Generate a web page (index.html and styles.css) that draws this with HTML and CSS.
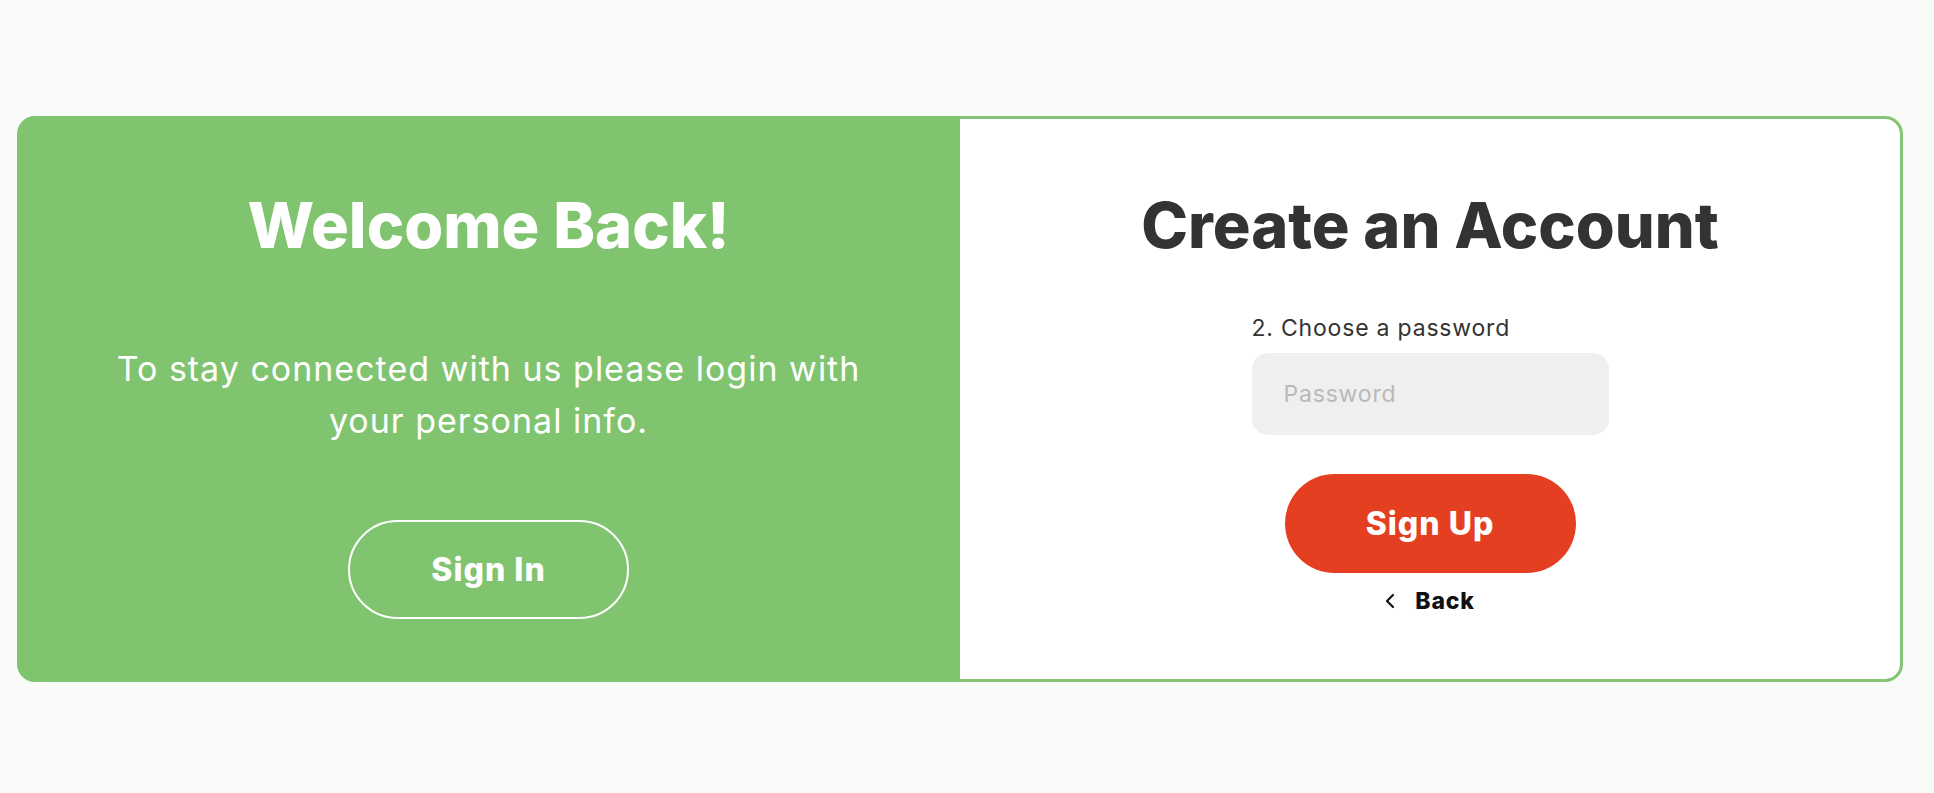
FILE: index.html
```html
<!DOCTYPE html>
<html lang="en">
<head>
<meta charset="utf-8">
<title>Create an Account</title>
<link rel="stylesheet" href="styles.css">
</head>
<body>
<main class="page">
  <div class="card">
    <section class="panel panel-welcome">
      <h1 class="title title-light">Welcome Back!</h1>
      <p class="lead">To stay connected with us please login with your personal info.</p>
      <button class="btn btn-ghost" type="button">Sign In</button>
    </section>
    <section class="panel panel-form">
      <h1 class="title title-dark">Create an Account</h1>
      <form class="form">
        <label class="field-label" for="pw">2. Choose a password</label>
        <input class="field-input" id="pw" type="password" placeholder="Password">
        <button class="btn btn-primary" type="button">Sign Up</button>
        <button class="back" type="button">
          <svg class="back-icon" viewBox="0 0 10 18" width="10" height="18" aria-hidden="true">
            <polyline points="8,3 2,9 8,15" fill="none" stroke="#111" stroke-width="2.2" stroke-linecap="round" stroke-linejoin="round"/>
          </svg>
          <span>Back</span>
        </button>
      </form>
    </section>
  </div>
</main>
</body>
</html>
```
FILE: styles.css
```css
* { box-sizing: border-box; }
html, body { margin: 0; padding: 0; }
body {
  background: #f9fbf8;
  font-family: Inter, "Noto Sans", "Liberation Sans", sans-serif;
}
.page {
  padding: 116px 0 0 17px;
  height: 793px;
}
.card {
  width: 1886px;
  height: 566px;
  display: grid;
  grid-template-columns: 943px 943px;
}
.panel {
  display: flex;
  flex-direction: column;
  align-items: center;
}
.panel-welcome {
  background: #81c470;
  border-radius: 18px 0 0 18px;
  padding-top: 71px;
}
.panel-form {
  background: #ffffff;
  border: 3px solid #84c474;
  border-left: none;
  border-radius: 0 18px 18px 0;
  padding-top: 68px;
}
.title {
  margin: 0;
  font-size: 63px;
  line-height: 76px;
  font-weight: 800;
  letter-spacing: 0;
}
.title-light { color: #ffffff; }
.title-dark { color: #333333; }
.lead {
  margin: 80px 0 0;
  max-width: 790px;
  text-align: center;
  color: #ffffff;
  font-size: 34px;
  line-height: 52px;
  font-weight: 400;
  letter-spacing: 1px;
}
.btn {
  font-family: inherit;
  font-weight: 800;
  font-size: 32px;
  letter-spacing: 1px;
  border-radius: 60px;
  cursor: pointer;
}
.btn-ghost {
  margin-top: 73px;
  width: 281px;
  height: 99px;
  background: transparent;
  border: 2px solid #ffffff;
  color: #ffffff;
}
.form {
  width: 357px;
  display: flex;
  flex-direction: column;
  align-items: center;
  margin-top: 50px;
}
.field-label {
  align-self: stretch;
  color: #333333;
  font-size: 23px;
  line-height: 30px;
  letter-spacing: 0.8px;
}
.field-input {
  margin-top: 10px;
  width: 357px;
  height: 82px;
  border: none;
  border-radius: 16px;
  background: #efefef;
  padding: 0 32px;
  font-family: inherit;
  font-size: 23px;
  letter-spacing: 0.8px;
  color: #333;
  outline: none;
}
.field-input::placeholder { color: #b9b9b9; }
.btn-primary {
  margin-top: 39px;
  width: 291px;
  height: 99px;
  border: none;
  background: #e53f22;
  color: #ffffff;
}
.back {
  margin-top: 13px;
  display: flex;
  align-items: center;
  gap: 20px;
  background: none;
  border: none;
  padding: 0;
  font-family: inherit;
  font-size: 23px;
  line-height: 30px;
  font-weight: 800;
  letter-spacing: 0.8px;
  color: #111111;
  cursor: pointer;
}
.back-icon { display: block; }
```
